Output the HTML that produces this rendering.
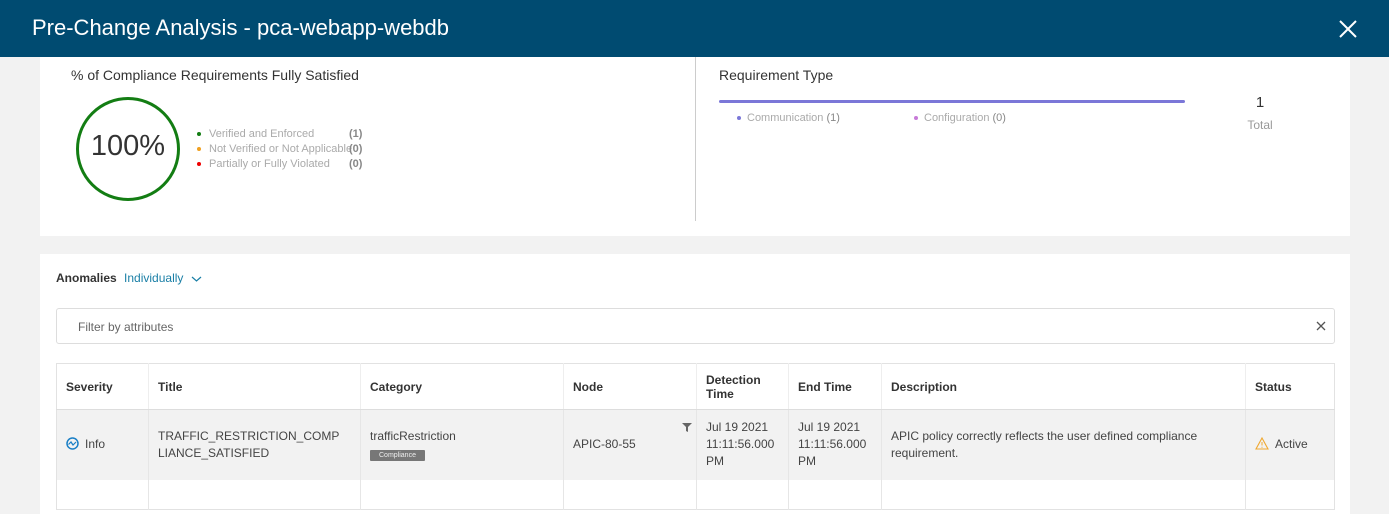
<!DOCTYPE html>
<html><head><style>
*{box-sizing:border-box;margin:0;padding:0}
body{width:1389px;height:503px;overflow:hidden;background:#f2f2f2;font-family:"Liberation Sans",Arial,sans-serif;position:relative;color:#333}
.hdr{position:absolute;left:0;top:0;width:1389px;height:57px;background:#004b71;color:#fff;font-size:22px;padding:15px 0 0 32px}
.abs{position:absolute}
.p1{position:absolute;left:40px;top:57px;width:1310px;height:179px;background:#fff}
.p2{position:absolute;left:40px;top:254px;width:1310px;height:260px;background:#fff}
.lg{font-size:11px;color:#aaa;position:absolute;white-space:nowrap}
.lg b{color:#888;position:absolute;left:152px}
.dot{display:inline-block;width:4px;height:4px;border-radius:50%;margin-right:8px;vertical-align:middle}
table{position:absolute;left:56px;top:363px;width:1279px;border-collapse:collapse;font-size:12px;border:1px solid #e2e2e2}
th{font-weight:bold;text-align:left;height:46px;padding:0 9px;border-right:1px solid #eee;border-bottom:1px solid #ddd;color:#333}
td{height:70px;padding:0 9px;background:#f2f2f2;border-right:1px solid #e6e6e6;line-height:17px;color:#444;vertical-align:middle}
tr.e td{background:#fff;height:30px}
th:last-child,td:last-child{border-right:none}
</style></head><body>
<div class="hdr">Pre-Change Analysis - pca-webapp-webdb</div>
<svg class="abs" style="left:1338px;top:19px" width="20" height="20"><path d="M2 2L18 18M18 2L2 18" stroke="#fff" stroke-width="2"/></svg>
<div class="p1"></div>
<div class="abs" style="left:71px;top:67px;font-size:14px;color:#333">% of Compliance Requirements Fully Satisfied</div>
<div class="abs" style="left:76px;top:97px;width:104px;height:104px;border:3.5px solid #137d13;border-radius:50%"></div>
<div class="abs" style="left:76px;top:130px;width:104px;text-align:center;font-size:29px;color:#333">100%</div>
<div class="lg" style="left:197px;top:128px"><span class="dot" style="background:#137d13"></span>Verified and Enforced<b>(1)</b></div>
<div class="lg" style="left:197px;top:143px"><span class="dot" style="background:#f0a020"></span>Not Verified or Not Applicable<b>(0)</b></div>
<div class="lg" style="left:197px;top:158px"><span class="dot" style="background:#e00"></span>Partially or Fully Violated<b>(0)</b></div>
<div class="abs" style="left:695px;top:57px;width:1px;height:164px;background:#ccc"></div>
<div class="abs" style="left:719px;top:67px;font-size:14px;color:#333">Requirement Type</div>
<div class="abs" style="left:719px;top:100px;width:466px;height:3px;border-radius:2px;background:#7b77d8"></div>
<div class="lg" style="left:737px;top:112px"><span class="dot" style="background:#7b77d8;margin-right:6px"></span>Communication <span style="color:#888">(1)</span></div>
<div class="lg" style="left:914px;top:112px"><span class="dot" style="background:#c77ad8;margin-right:6px"></span>Configuration <span style="color:#888">(0)</span></div>
<div class="abs" style="left:1240px;top:94px;width:40px;text-align:center;font-size:15px;color:#333">1</div>
<div class="abs" style="left:1240px;top:118px;width:40px;text-align:center;font-size:12px;color:#999">Total</div>
<div class="p2"></div>
<div class="abs" style="left:56px;top:271px;font-size:12px"><b style="color:#333">Anomalies</b> <span style="color:#1a7fa6;margin-left:4px">Individually</span></div>
<svg class="abs" style="left:191px;top:275px" width="11" height="8"><path d="M1 2L5.5 6L10 2" stroke="#1a7fa6" fill="none" stroke-width="1.2"/></svg>
<div class="abs" style="left:56px;top:308px;width:1279px;height:36px;border:1px solid #ddd;border-radius:3px;font-size:12px;color:#666;padding:11px 0 0 21px">Filter by attributes</div>
<svg class="abs" style="left:1316px;top:321px" width="10" height="10"><path d="M1 1L9 9M9 1L1 9" stroke="#555" stroke-width="1.3"/></svg>
<table>
<tr><th style="width:92px">Severity</th><th style="width:212px">Title</th><th style="width:203px">Category</th><th style="width:133px">Node</th><th style="width:92px;line-height:14px">Detection<br>Time</th><th style="width:93px">End Time</th><th style="width:364px">Description</th><th>Status</th></tr>
<tr><td><svg width="13" height="13" style="vertical-align:-2px;margin-right:6px"><circle cx="6.5" cy="6.5" r="5.5" stroke="#1a7fc6" stroke-width="1.5" fill="none"/><path d="M2.5 7.5L5 5L7 8L10 5" stroke="#1a7fc6" fill="none" stroke-width="1.2"/></svg>Info</td>
<td>TRAFFIC_RESTRICTION_COMP<br>LIANCE_SATISFIED</td>
<td>trafficRestriction<br><span style="display:inline-block;background:#777;color:#eee;font-size:7px;line-height:11px;padding:0 9px;border-radius:1px;margin-top:2px">Compliance</span></td>
<td style="position:relative">APIC-80-55<svg style="position:absolute;right:4px;top:13px" width="10" height="9"><path d="M0 0H10L6 4V9L4 8V4Z" fill="#666"/></svg></td>
<td>Jul 19 2021<br>11:11:56.000<br>PM</td>
<td>Jul 19 2021<br>11:11:56.000<br>PM</td>
<td>APIC policy correctly reflects the user defined compliance<br>requirement.</td>
<td><svg width="14" height="13" style="vertical-align:-2px;margin-right:6px"><path d="M7 1L13 12H1Z" stroke="#f0a830" fill="none" stroke-width="1.1"/><path d="M7 5V8.5M7 9.8V10.8" stroke="#f0a830"/></svg>Active</td></tr>
<tr class="e"><td></td><td></td><td></td><td></td><td></td><td></td><td></td><td></td></tr>
</table>
</body></html>
